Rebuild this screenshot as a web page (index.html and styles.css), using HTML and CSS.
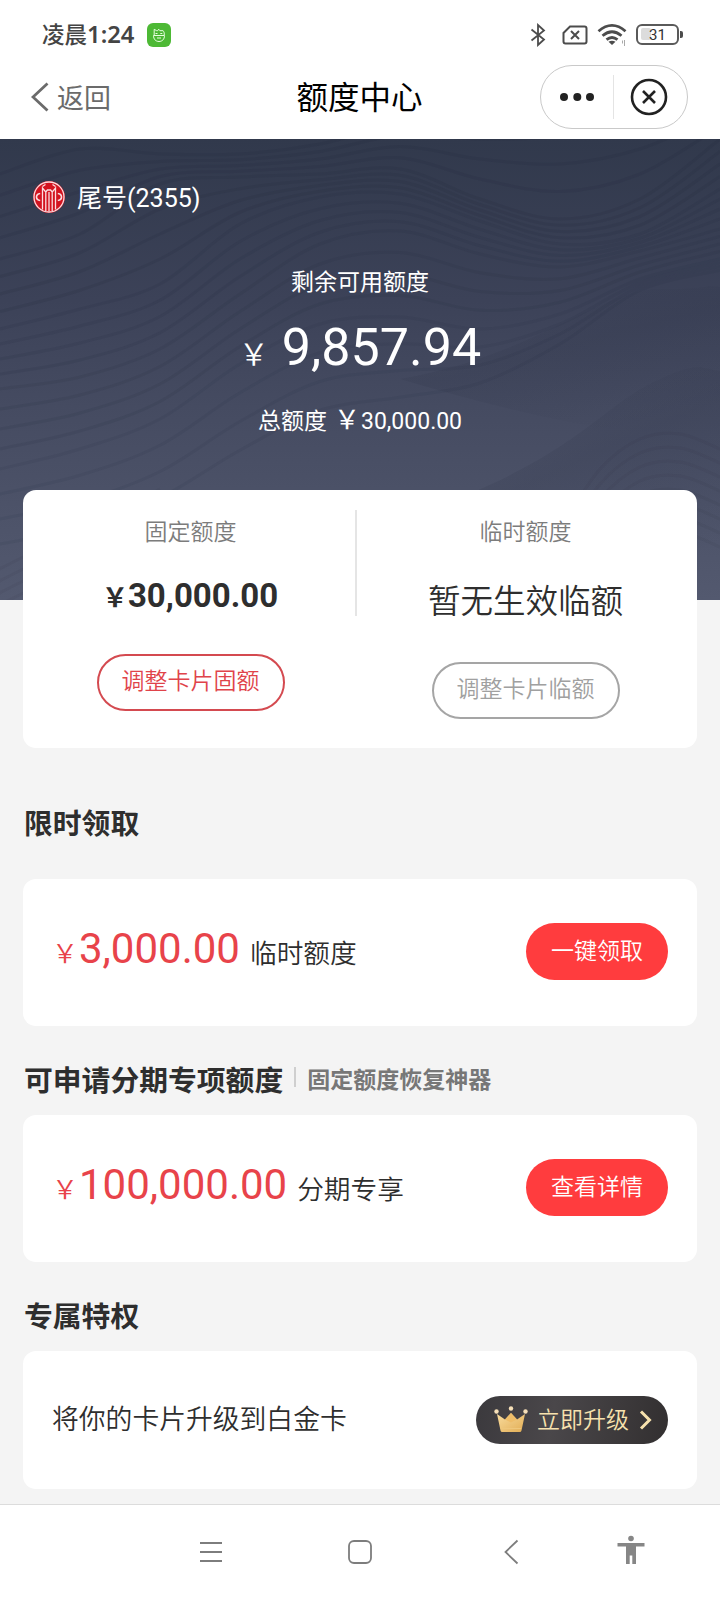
FILE: index.html
```html
<!DOCTYPE html>
<html lang="zh-CN">
<head>
<meta charset="utf-8">
<title>额度中心</title>
<link rel="stylesheet" href="styles.css">
</head>
<body>
<div class="status">
  <span class="clock">凌晨<span class="clock-num">1:24</span></span>
  <svg class="app-icon" width="24" height="24" viewBox="0 0 24 24"><rect width="24" height="24" rx="6" fill="#4db935"/><g fill="none" stroke="#e8ffe0" stroke-width="1"><path d="M6.500 12.500h11c0 3.800-2.300 6-5.500 6s-5.500-2.200-5.500-6z"/><path d="M7.200 12V6.300l2.500 1.400h1l1-1.500 1.200 1.500h3.200c1.200 1.500 1.300 2.800 1.100 4.300"/><path d="M8.500 10.500h2m2.800 0h2M10 15h4"/></g></svg>
  <div class="status-icons">
    <svg width="16" height="24" viewBox="0 0 16 24" fill="none" stroke="#4c4c4c" stroke-width="1.800"><path d="M1.500 6.500 14 16.500 8 22V2l6 5.500L1.500 17.500"/></svg>
    <svg class="sim" width="26" height="20" viewBox="0 0 26 20" fill="none" stroke="#4c4c4c" stroke-width="2"><path d="M8 1.500h14.500a2 2 0 0 1 2 2v13a2 2 0 0 1-2 2h-19a2 2 0 0 1-2-2V8z"/><path d="m9 6 8 8m0-8-8 8"/></svg>
    <svg class="wifi" width="30" height="23" viewBox="0 0 30 23" fill="none" stroke="#4c4c4c" stroke-width="2.800"><path d="M1.500 8.200Q15-3.500 28.500 8.200M5.500 12.700q9.500-8 19 0M9.500 16.700q5.500-4.500 11 0"/><path d="m11.500 18.800 3.500 3.200 3.500-3.200q-3.500-2-7 0z" fill="#4c4c4c" stroke="none"/><path d="M25.500 20.500v-3M27.500 17v6" stroke="#aaa" stroke-width="1"/></svg>
    <div class="battery"><span class="battery-level"></span><span class="battery-num">31</span></div><span class="battery-cap"></span>
  </div>
</div>
<header class="header">
  <div class="back"><svg width="18" height="30" viewBox="0 0 18 30" fill="none" stroke="#6b6b6b" stroke-width="2.800"><path d="M16.500 1.500 2 15l14.500 13.500"/></svg><span>返回</span></div>
  <h1 class="title">额度中心</h1>
  <div class="capsule">
    <span class="capsule-half"><svg width="36" height="10" viewBox="0 0 36 10" fill="#222"><circle cx="5" cy="5" r="4"/><circle cx="18.300" cy="5" r="4"/><circle cx="31" cy="5" r="4"/></svg></span>
    <span class="capsule-half capsule-close"><svg width="38" height="38" viewBox="0 0 38 38" fill="none" stroke="#222" stroke-width="2.600"><circle cx="19" cy="19" r="17"/><path d="m13 13 12 12m0-12L13 25"/></svg></span>
  </div>
</header>
<section class="hero">
  <svg class="waves" id="waves" width="720" height="461" viewBox="0 0 720 461" fill="none">
    <defs>
      <linearGradient id="shade" x1="0.300" y1="0.100" x2="0.750" y2="0.900"><stop offset="0" stop-color="#2f3549" stop-opacity="0"/><stop offset=".4" stop-color="#2f3549" stop-opacity=".2"/><stop offset="1" stop-color="#2f3549" stop-opacity="0"/></linearGradient>
    </defs>
    <path fill="url(#shade)" d="M400 240C540 215 600 150 660 150S700 145 720 148V300Q600 300 400 240z"/>
    <path fill="url(#shade)" d="M430 370C570 320 600 270 650 245S700 230 720 232V461Q600 461 430 370z"/>
  </svg>
  <div class="card-no">
    <svg width="34" height="34" viewBox="0 0 34 34"><circle cx="17" cy="17" r="16" fill="#d3131f"/><g fill="none" stroke="#fbdde0" stroke-width="1.300"><circle cx="17" cy="17" r="15"/><path d="M10.500 29.500V8L13.800 12V31M23.500 29.500V8L20.200 12V31M10.500 6.500 13.500 4.500M23.500 6.500l-3-2M17 12v19M13.800 12l1.600-2h3.200l1.600 2"/><path d="M8.200 13.500Q4.500 14 4.500 17t3.700 3.500M25.800 13.500q3.700.5 3.700 3.500t-3.700 3.500" stroke-width="1.600"/></g></svg>
    <span>尾号(2355)</span>
  </div>
  <div class="hero-label">剩余可用额度</div>
  <div class="hero-amount"><span class="hero-yen">&#xFFE5;</span><span>9,857.94</span></div>
  <div class="hero-total"><span>总额度</span><span class="total-yen">&#xFFE5;</span><span>30,000.00</span></div>
</section>
<main class="content">
  <section class="card limits">
    <div class="limit">
      <div class="limit-label">固定额度</div>
      <div class="limit-amount"><span class="limit-yen">&#xFFE5;</span>30,000.00</div>
      <button class="outline-btn">调整卡片固额</button>
    </div>
    <div class="limit limit-temp">
      <div class="limit-label">临时额度</div>
      <div class="limit-none">暂无生效临额</div>
      <button class="outline-btn outline-btn-off">调整卡片临额</button>
    </div>
  </section>
  <h2 class="heading heading-first">限时领取</h2>
  <section class="card offer">
    <div class="offer-text"><span class="offer-yen">&#xFFE5;</span><span class="offer-amount">3,000.00</span><span class="offer-name">临时额度</span></div>
    <button class="red-btn">一键领取</button>
  </section>
  <h2 class="heading">可申请分期专项额度<span class="heading-sub">固定额度恢复神器</span></h2>
  <section class="card offer">
    <div class="offer-text"><span class="offer-yen">&#xFFE5;</span><span class="offer-amount">100,000.00</span><span class="offer-name">分期专享</span></div>
    <button class="red-btn">查看详情</button>
  </section>
  <h2 class="heading">专属特权</h2>
  <section class="card upgrade">
    <span class="upgrade-text">将你的卡片升级到白金卡</span>
    <button class="gold-btn">
      <svg width="34" height="28" viewBox="0 0 34 28"><defs><linearGradient id="gold" x2="1" y2="1"><stop stop-color="#f9dda0"/><stop offset="1" stop-color="#e2ad54"/></linearGradient></defs><path d="m3 8 8 5.500L17 7l6 6.500L31 8l-3.500 16.500q-.3 1.500-1.800 1.500H8.300q-1.500 0-1.800-1.500z" fill="url(#gold)"/><path d="m11 13.500 6-6.500 6 6.500-6 3z" fill="#eebd69"/><path d="M7 22.500h20" stroke="#efc77c" stroke-width="1"/><g fill="#f6dfb8"><circle cx="2.500" cy="5.500" r="2.200"/><circle cx="17" cy="2.500" r="2.200"/><circle cx="31.500" cy="5.500" r="2.200"/></g></svg>
      <span>立即升级</span>
      <svg class="gold-arrow" width="13" height="20" viewBox="0 0 13 20" fill="none" stroke="#f7e2ae" stroke-width="3"><path d="m2 1.500 8.500 8.500L2 18.500"/></svg>
    </button>
  </section>
</main>
<nav class="sysnav">
  <svg width="24" height="24" viewBox="0 0 24 24" stroke="#7d7d7d" stroke-width="1.800"><path d="M1 3h22M1 12h22M1 21h22"/></svg>
  <svg class="nav-home" width="24" height="24" viewBox="0 0 24 24" fill="none" stroke="#7d7d7d" stroke-width="1.800"><rect x="1" y="1" width="22" height="22" rx="5"/></svg>
  <svg class="nav-back" width="15" height="26" viewBox="0 0 15 26" fill="none" stroke="#7d7d7d" stroke-width="1.800"><path d="M13.500 1.500 1.500 13l12 11.500"/></svg>
  <svg class="nav-access" width="28" height="30" viewBox="0 0 28 30" fill="#868686"><circle cx="14" cy="3.500" r="2.800"/><path d="M.5 8h27v3.500H19V29h-3.700v-8.500h-2.600V29H9V11.500H.5z"/></svg>
</nav>
<script src="waves.js"></script>
</body>
</html>
```
FILE: styles.css
```css
* { box-sizing: border-box; }
body {
  margin: 0;
  width: 720px;
  height: 1600px;
  overflow: hidden;
  display: flex;
  flex-direction: column;
  background: #f4f4f4;
  color: #2e2e2e;
  font-family: Roboto, "Noto Sans CJK SC", sans-serif;
}
svg { display: block; flex: none; }
button { font: inherit; padding: 0; margin: 0; }

.status { height: 64px; flex: none; display: flex; align-items: center; padding: 5px 37px 0 42px; background: #fff; }
.clock { font-size: 22.5px; font-weight: 500; color: #444; line-height: 32px; width: 105px; white-space: nowrap; }
.clock-num { font-family: "Noto Sans", sans-serif; font-size: 23.8px; font-weight: 600; }
.status-icons { margin-left: auto; display: flex; align-items: center; }
.sim { margin-left: 16px; }
.wifi { margin-left: 9px; }
.battery { position: relative; width: 43px; height: 21px; margin-left: 9px; border: 2.5px solid #5a5a5a; border-radius: 6px; display: flex; align-items: center; justify-content: center; }
.battery-level { position: absolute; left: 3px; top: 2px; width: 10px; height: 12px; background: #dcdcdc; border-radius: 2px; }
.battery-num { position: relative; font-size: 15px; line-height: 16px; color: #333; }
.battery-cap { width: 3px; height: 7px; margin-left: 1px; background: #4c4c4c; border-radius: 0 2px 2px 0; }

.header { height: 75px; flex: none; display: grid; grid-template-columns: 1fr auto 1fr; align-items: center; padding: 0 32px 10px 31px; background: #fff; }
.back { display: flex; align-items: center; gap: 8px; font-size: 27px; line-height: 36px; color: #6b6b6b; }
.back span { padding-top: 4px; }
.title { margin: 0; padding-top: 5px; font-size: 31.5px; line-height: 40px; font-weight: 400; color: #000; }
.capsule { justify-self: end; width: 148px; height: 64px; margin-top: 1px; border: 1px solid #c9c9c9; border-radius: 32px; display: flex; align-items: center; }
.capsule-half { flex: 1; height: 44px; display: flex; align-items: center; justify-content: center; }
.capsule-half svg { margin-top: -1px; }
.capsule-close { border-left: 1px solid #e4e4e4; padding-right: 2px; }

.hero { position: relative; height: 461px; flex: none; color: #fff; text-align: center; background: linear-gradient(#31394c, #3c4258 35%, #454b61 58%, #53596f); }
.waves { position: absolute; inset: 0; }
.hero > div { position: relative; }
.card-no { display: flex; align-items: center; gap: 11px; padding: 41px 0 0 32px; height: 75px; font-size: 25px; line-height: 34px; }
.card-no span { padding-top: 3px; }
.hero-label { margin-top: 52px; font-size: 23px; line-height: 34px; }
.hero-amount { margin-top: 16px; display: flex; justify-content: center; align-items: baseline; font-size: 52px; line-height: 64px; padding-left: 0; }
.hero-yen { width: 42px; margin-right: 1px; text-align: left; font-family: "Noto Sans CJK SC", sans-serif; font-size: 30px; line-height: 34px; font-weight: 350; }
.hero-total { margin-top: 21px; display: flex; justify-content: center; align-items: baseline; font-size: 23px; line-height: 34px; }
.total-yen { margin: 0 1px 0 7px; font-family: "Noto Sans CJK SC", sans-serif; font-size: 26px; }

.content { flex: none; height: 1014px; margin-top: -110px; padding: 0 23px; position: relative; }
.card { background: #fff; border-radius: 13px; }
.limits { display: grid; grid-template-columns: 333px 341px; height: 258px; position: relative; }
.limits::after { content: ""; position: absolute; left: 332px; top: 20px; width: 2px; height: 106px; background: #e5e5e5; }
.limit { display: flex; flex-direction: column; align-items: center; padding-top: 26px; }
.limit:first-child { padding-left: 2px; }
.limit-temp { padding-right: 2px; }
.limit-label { font-size: 23px; line-height: 34px; font-weight: 350; color: #7c7c7c; }
.limit-amount { margin-top: 26px; height: 38px; display: flex; align-items: baseline; font-size: 33px; line-height: 40px; font-weight: 700; }
.limit-yen { font-family: "Noto Sans CJK SC", sans-serif; font-size: 26px; line-height: 30px; font-weight: 600; margin-left: -1px; }
.limit-none { margin-top: 31px; font-size: 32.5px; line-height: 42px; font-weight: 350; }
.outline-btn { width: 188px; height: 57px; margin-top: 40px; border: 2px solid #d44a50; border-radius: 29px; background: none; color: #e0434a; font-size: 23px; font-weight: 350; line-height: 52px; padding-bottom: 1px; }
.limit-temp .outline-btn { margin-top: 39px; }
.outline-btn-off { border-color: #a5a5a5; color: #a0a0a0; }

.heading { margin: 0; height: 89px; display: flex; align-items: center; padding: 20px 0 0 1px; font-size: 28.8px; line-height: 40px; font-weight: 600; }
.heading-first { height: 131px; }
.heading-sub { position: relative; margin-left: 24px; padding-top: 1px; font-size: 23px; color: #777; }
.heading-sub::before { content: ""; position: absolute; left: -13px; top: 7px; width: 2px; height: 20px; background: #cfcfcf; }
.offer { display: flex; justify-content: space-between; align-items: center; height: 147px; padding: 0 29px 2px 30px; }
.offer-text { display: flex; align-items: baseline; line-height: 50px; }
.offer-yen { width: 26px; font-family: "Noto Sans CJK SC", sans-serif; font-size: 26px; font-weight: 350; color: #e8434a; text-indent: -1px; }
.offer-amount { font-size: 42px; color: #e8434a; }
.offer-name { margin-left: 10px; font-size: 26.7px; font-weight: 350; }
.red-btn { width: 142px; height: 57px; border: 0; border-radius: 29px; background: #ff3c3e; color: #fff; font-size: 23px; font-weight: 350; line-height: 57px; }
.upgrade { display: flex; align-items: center; justify-content: space-between; height: 138px; padding: 0 29px 1px 29px; }
.upgrade-text { font-size: 26.8px; line-height: 40px; font-weight: 350; }
.gold-btn { width: 192px; height: 48px; border: 0; border-radius: 24px; background: linear-gradient(100deg, #3b393d, #4a474a 40%, #322f30); color: #f7e2ae; font-size: 23px; font-weight: 350; line-height: 48px; display: flex; align-items: center; padding-left: 18px; }
.gold-btn span { margin-left: 9px; padding-top: 2px; }
.gold-arrow { margin-left: 10px; }

.sysnav { flex: none; height: 96px; border-top: 1px solid #dcdcdc; background: #fff; display: flex; align-items: center; padding: 0 75px 2px 199px; }
.nav-home { margin-left: 125px; }
.nav-back { margin-left: 132px; }
.nav-access { margin: -4px 0 0 auto; }
```
FILE: waves.js
```js
// Contour lines: blends between key curves sampled every 80px.
(function () {
  var svg = document.getElementById('waves');
  var keys = [
    [35, 10, 15, 15, 5, -15, -20, -30, -40, -50],
    [120, 95, 45, 38, 35, 30, 60, 80, 60, 0],
    [190, 170, 145, 85, 58, 55, 82, 105, 95, 50],
    [250, 238, 210, 155, 105, 92, 115, 128, 112, 90],
    [330, 310, 280, 225, 185, 178, 190, 175, 140, 120],
    [430, 415, 385, 340, 300, 285, 262, 215, 155, 135]
  ];
  function draw(ys, x0, step, alpha) {
    var p = ys.map(function (y, i) { return [x0 + i * step, y]; });
    var d = 'M' + p[0];
    for (var i = 0; i < p.length - 1; i++) {
      var a = p[Math.max(i - 1, 0)], b = p[i], c = p[i + 1], e = p[Math.min(i + 2, p.length - 1)];
      d += 'C' + [b[0] + (c[0] - a[0]) / 6, b[1] + (c[1] - a[1]) / 6, c[0] - (e[0] - b[0]) / 6, c[1] - (e[1] - b[1]) / 6, c[0], c[1]];
    }
    var el = document.createElementNS('http://www.w3.org/2000/svg', 'path');
    el.setAttribute('d', d);
    el.setAttribute('stroke', 'rgba(36,42,62,' + alpha + ')');
    el.setAttribute('stroke-width', 3);
    svg.appendChild(el);
  }
  for (var k = 0; k < keys.length - 1; k++) {
    for (var s = 0; s < 4; s++) {
      draw(keys[k].map(function (y, i) { return y + (keys[k + 1][i] - y) * s / 4; }), 0, 80, 0.19 - k * 0.024);
    }
  }
  for (var r = 0; r < 8; r++) {
    draw([390 + r * 16, 330 + r * 15, 300 + r * 14, 295 + r * 14, 310 + r * 14], 560, 40, 0.07);
    draw([440 + r * 12, 410 + r * 12, 385 + r * 12, 350 + r * 12], -20, 60, 0.07);
  }
})();
```
